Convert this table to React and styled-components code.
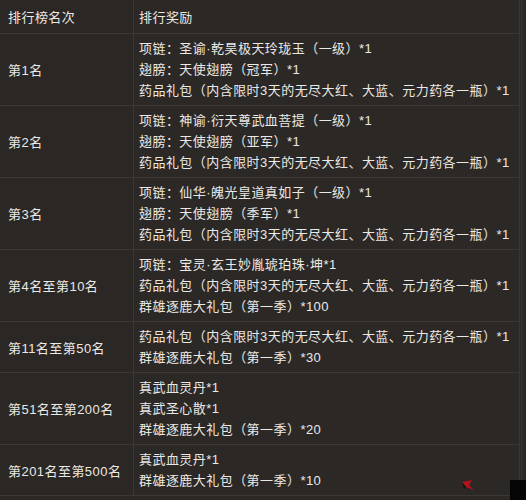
import React from 'react'
import styled, { createGlobalStyle } from 'styled-components'

const Global = createGlobalStyle`
  html, body { margin: 0; padding: 0; background: #2b2825; }
  body { width: 526px; height: 500px; overflow: hidden; }
`

const rows = [
    {
        rank: "第1名",
        items: [
            "项链：圣谕·乾昊极天玲珑玉（一级）*1",
            "翅膀：天使翅膀（冠军）*1",
            "药品礼包（内含限时3天的无尽大红、大蓝、元力药各一瓶）*1",
        ],
    },
    {
        rank: "第2名",
        items: [
            "项链：神谕·衍天尊武血菩提（一级）*1",
            "翅膀：天使翅膀（亚军）*1",
            "药品礼包（内含限时3天的无尽大红、大蓝、元力药各一瓶）*1",
        ],
    },
    {
        rank: "第3名",
        items: [
            "项链：仙华·魄光皇道真如子（一级）*1",
            "翅膀：天使翅膀（季军）*1",
            "药品礼包（内含限时3天的无尽大红、大蓝、元力药各一瓶）*1",
        ],
    },
    {
        rank: "第4名至第10名",
        items: [
            "项链：宝灵·玄王妙胤琥珀珠·坤*1",
            "药品礼包（内含限时3天的无尽大红、大蓝、元力药各一瓶）*1",
            "群雄逐鹿大礼包（第一季）*100",
        ],
    },
    {
        rank: "第11名至第50名",
        items: [
            "药品礼包（内含限时3天的无尽大红、大蓝、元力药各一瓶）*1",
            "群雄逐鹿大礼包（第一季）*30",
        ],
    },
    {
        rank: "第51名至第200名",
        items: [
            "真武血灵丹*1",
            "真武圣心散*1",
            "群雄逐鹿大礼包（第一季）*20",
        ],
    },
    {
        rank: "第201名至第500名",
        items: [
            "真武血灵丹*1",
            "群雄逐鹿大礼包（第一季）*10",
        ],
    },
]

export default function App() {
    return (
        <>
            <Global />
            <Page>
                <Table>
                    <thead>
                        <tr>
                            <HeadCell $first>排行榜名次</HeadCell>
                            <HeadCell>排行奖励</HeadCell>
                        </tr>
                    </thead>
                    <tbody>
                        {rows.map((r) => (
                            <tr key={r.rank}>
                                <RankCell>{r.rank}</RankCell>
                                <RewardCell>
                                    {r.items.map((t, i) => (
                                        <Line key={i}>{t}</Line>
                                    ))}
                                </RewardCell>
                            </tr>
                        ))}
                    </tbody>
                </Table>
                <Mark viewBox="0 0 20 14">
                    <path d="M2 4 L12 2 L9 7 L14 12 L6 9 Z" fill="#b0141c" />
                    <path d="M2 4 L6 9 L4 11 Z" fill="#111" />
                </Mark>
                <Corner />
            </Page>
        </>
    )
}

const Page = styled.div`
position:relative;
width:526px;
height:500px;
background:#2b2825;
font-family:"Liberation Sans", "Noto Sans CJK SC", sans-serif;
color:#ebe9e6;
`

const Table = styled.table`
width:522px;
border-collapse:separate;
border-spacing:0;
border-right:3px double #3a3633;
font-size:13px;
letter-spacing:0.45px;
`

const HeadCell = styled.th`
height:33px;
padding:0 0 0 ${p => p.$first ? '8px' : '5px'};
font-weight:normal;
text-align:left;
vertical-align:middle;
border-bottom:1px solid #3c3835;
border-right:${p => p.$first ? '1px solid #3c3835' : 'none'};
background:${p => p.$first ? '#2a2724' : 'transparent'};
width:${p => p.$first ? '125px' : 'auto'};
`

const RankCell = styled.td`
width:125px;
padding:0 0 0 8px;
vertical-align:middle;
border-bottom:1px solid #3c3835;
border-right:1px solid #3c3835;
background:#2a2724;
`

const RewardCell = styled.td`
padding:4px 0 4px 5px;
vertical-align:middle;
border-bottom:1px solid #3c3835;
`

const Line = styled.div`
line-height:21px;
white-space:nowrap;
`

const Mark = styled.svg`
position:absolute;
left:460px;
top:478px;
width:20px;
height:14px;
`

const Corner = styled.div`
position:absolute;
right:0;
bottom:0;
width:16px;
height:20px;
background:#050505;
`
